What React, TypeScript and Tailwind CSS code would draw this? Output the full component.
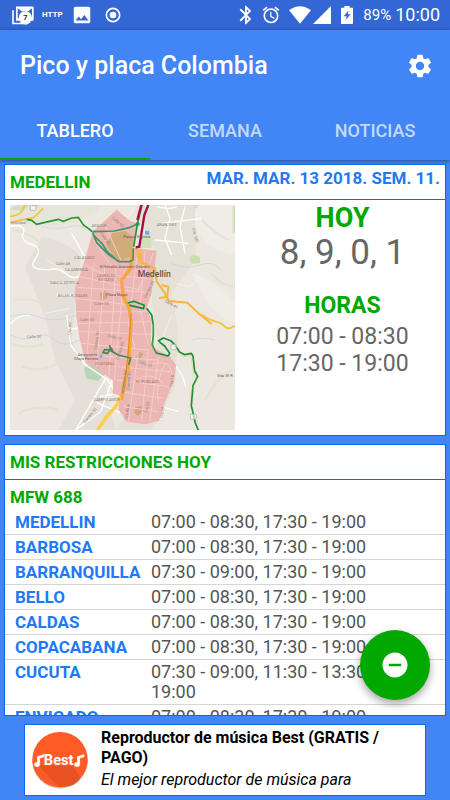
import React, { useState } from "react";
import { MdAlarm, MdBluetooth, MdImage, MdRemoveCircle, MdSettings } from "react-icons/md";

interface Restriction {
  city: string;
  hours: string;
}

const TABS = ["TABLERO", "SEMANA", "NOTICIAS"];

const RESTRICTIONS: Restriction[] = [
  { city: "MEDELLIN", hours: "07:00 - 08:30, 17:30 - 19:00" },
  { city: "BARBOSA", hours: "07:00 - 08:30, 17:30 - 19:00" },
  { city: "BARRANQUILLA", hours: "07:30 - 09:00, 17:30 - 19:00" },
  { city: "BELLO", hours: "07:00 - 08:30, 17:30 - 19:00" },
  { city: "CALDAS", hours: "07:00 - 08:30, 17:30 - 19:00" },
  { city: "COPACABANA", hours: "07:00 - 08:30, 17:30 - 19:00" },
  { city: "CUCUTA", hours: "07:30 - 09:00, 11:30 - 13:30, 17:30 - 19:00" },
  { city: "ENVIGADO", hours: "07:00 - 08:30, 17:30 - 19:00" },
];

const StatusBar = () => (
  <div className="flex h-[30px] shrink-0 items-center justify-between bg-[#3367d6] pr-[10px] pl-3 text-white">
    <div className="flex items-center">
      {/* Gallery notification with its counter */}
      <svg viewBox="0 0 66 56" className="h-[19px] w-[22px]" aria-hidden="true">
        <path d="M3 12v40h44" fill="none" stroke="#fff" strokeWidth="5" />
        <path d="M12 1h50q3 0 3 3v36q0 4-4 4H12z" fill="#fff" />
        <path d="M17 6l13 10h18L60 6v30H17z" fill="#3367d6" />
        <circle cx="40" cy="35" r="20" fill="#fff" />
        <text x="40" y="43" textAnchor="middle" fontSize="22" fontWeight="700" fill="#222">
          7
        </text>
      </svg>
      <span className="ml-2 text-[8px] leading-none font-bold">HTTP</span>
      <MdImage size={22} className="ml-2" />
      <svg viewBox="0 0 48 48" className="ml-3 h-4 w-4" aria-hidden="true">
        <circle cx="24" cy="24" r="20" fill="none" stroke="#fff" strokeWidth="5" />
        <circle cx="24" cy="24" r="10" fill="#fff" />
      </svg>
    </div>

    <div className="flex items-center">
      <MdBluetooth size={22} />
      <MdAlarm size={20} className="ml-1" />
      <svg viewBox="0 0 66 54" className="ml-2 h-[18px] w-[22px]" fill="currentColor" aria-hidden="true">
        <path d="M0 13Q33-11 66 13L33 53z" />
      </svg>
      <svg viewBox="0 0 54 54" className="ml-[2px] h-[18px] w-[18px]" fill="currentColor" aria-hidden="true">
        <path d="M54 0v54H0z" />
      </svg>
      <svg viewBox="0 0 36 54" className="ml-[10px] h-[18px] w-3" aria-hidden="true">
        <path d="M10 0h16v5h8q2 0 2 2v45q0 2-2 2H2q-2 0-2-2V7q0-2 2-2h8z" fill="#fff" />
        <path d="M23 13L8 31h9l-4 12 16-18h-9z" fill="#3367d6" />
      </svg>
      <span className="ml-[10px] text-[15px] leading-5">89%</span>
      <span className="ml-1 text-[18px] leading-5">10:00</span>
    </div>
  </div>
);

const MedellinMap = () => (
  <svg viewBox="15 15 675 675" className="block w-full" role="img" aria-label="Mapa de Medellin">
    <rect x="15" y="15" width="675" height="675" fill="#ece8df" />

    {/* Relief */}
    <path d="M15 60q100 30 180 10t90-55H15z" fill="#e6e5da" />
    <path d="M110 110Q200 130 225 170L200 420 240 500 300 550 330 690H160L210 600 150 480 120 350 60 200z" fill="#e4e0d7" />
    <path d="M385 15H580L570 180 500 280 520 400 510 560 440 690H330L470 520 440 300 450 160z" fill="#e5e1d7" />
    <path d="M570 15h120v150q-80-10-120-80zM560 220q80 20 130 90v60q-60-20-90-80z" fill="#efede6" />
    <path d="M25 90q60 10 90 50M30 300q60-10 90 20M50 500q60 20 110-10M40 640q60-30 120-10M590 60q40 40 80 60M600 600q30-60 80-90M620 220q30 40 70 40M15 430q60 20 100 0" fill="none" stroke="#e5e1d6" strokeWidth="7" />

    {/* Parks */}
    <path d="M237 503l20-13 33 15 10 20-22 18-35-8z" fill="#b9d5b5" />
    <path d="M553 172l15-7 17 6v18l-26 3z" fill="#c5dfae" />
    <path d="M15 26l25-11h30l-15 20zM562 15h20l-10 12zM683 18h7v80h-7zM410 110l20-6 10 12v28h-30z" fill="#d3dfbb" />

    {/* Streams */}
    <path d="M15 350q50-16 90 2t110-6M15 405q40 20 75 5t60 10 75 0M110 80q50 10 85 0t70 20M500 190q40 20 85 5t60 15M560 420q30-10 70 0" fill="none" stroke="#bfd0e0" strokeWidth="2" />

    {/* Secondary streets */}
    <path d="M15 78q50-5 40 20t25 35 10 45 45 30q30-5 50 15t50 0M15 372q30-30 60-25M185 345l12 90 45 60 60 40-90 155M327 525l-40 110-75 55M305 535l35 55M190 390l40-8M155 285h60M150 245l60 5M480 15l15 40-15 60 20 50M540 20l-15 60 15 80M470 70l120-15M450 120l100 10M455 20q40 10 60 0M512 500q20 15 30 60M470 620l50 15M285 590l55-10M275 608l70 30M200 100l50 90-30 60" fill="none" stroke="#fff" strokeWidth="4" />
    <path d="M500 345l-25 60 15 40M510 250l40 10 30-20M515 300l30 30M395 15l-25 35-40-10M590 80l30 15M125 180l70 40M120 340l75-15" fill="none" stroke="#f8f6f0" strokeWidth="2" />

    {/* Restricted area */}
    <path
      d="M335 29L375 63 400 70 385 143 455 152 440 280 425 325 440 360 437 420 447 445 493 467 513 495 508 540 480 605 462 663 420 673 365 665 340 628 345 588 323 580 325 543 278 507 242 490 225 420 214 350 210 265 235 195 263 95z"
      fill="#ecb6b2"
    />
    <path d="M322 100l40-7 22 20-2 55-45 18-34-52z" fill="#cfac79" />
    <path d="M285 280l18-8 5 22-20 8zM390 622l20-4 8 14-20 16-10-9zM400 455l15 5-10 20-12-8z" fill="#d3a488" />

    {/* Streets inside the area */}
    <g fill="none" stroke="#f4cfcb" strokeWidth="3">
      <path d="M240 195l60 30 130 10M225 230l180 40M215 262l215 15M214 295l200 25M215 335h220M220 370l220-5M225 395l215 8M230 430l200 20M240 465l220 15" />
      <path d="M265 120l55 80M300 75l50 110M265 195l-20 290M300 200l-25 300M332 205l-20 320M358 210l-30 330M395 175l-25 200 20 70M420 155l-15 170 25 110M445 160l-45 110" />
      <path d="M340 500l155 15M335 540l155 20M345 575l130 20M355 620l105 15M400 455l-30 210M430 450l-20 210M460 470l-25 190M480 490q-30 60-20 120M385 470q30 30 70 20t45 30M395 540q40-30 80 10" />
    </g>

    {/* Highways */}
    <path d="M382 150l-5 55-27 35 5 50 18 35 5 40-8 135-15 70-6 30" fill="none" stroke="#f9a53a" strokeWidth="10" />
    <path d="M395 145l10 40 45 20 5 40 22 30 15 28 55 5 35 33 38 31M405 150l5 45M470 255l20 5-3 30-25 5" fill="none" stroke="#f8b53f" strokeWidth="6" />
    <path d="M343 590q0 20-20 40t-45 60" fill="none" stroke="#fbcf4a" strokeWidth="10" />
    <path d="M15 50q35-5 40-25t45-8M15 67l70-14 30-28M590 344q20 15 40 20t30 16 30-3" fill="none" stroke="#f7c33c" strokeWidth="5" />
    <path d="M378 340l-4 70-10 100-14 70" fill="none" stroke="#e38b20" strokeWidth="3" />

    {/* Pico y placa routes */}
    <path d="M65 58l15 3 15 12 35-8 30-7 15 6 25-10 20-2 15 23 15 10 12 10" fill="none" stroke="#27962f" strokeWidth="5" />
    <path d="M263 95l65-2 45-10 25-12M263 98l12 30 35 35 32 22h30l12-5 1-35M268 108l25 25 12 20 25 23" fill="none" stroke="#3d966c" strokeWidth="5" />
    <path d="M411 15l-13 53-12 72" fill="none" stroke="#27962f" strokeWidth="5" />
    <path d="M409 15l-12 45M430 15l-12 30-15 95-11 2" fill="none" stroke="#a30d48" strokeWidth="7" />
    <circle cx="398" cy="72" r="6" fill="#1d9b62" />
    <path d="M368 309l18-5 32 12-3 10-40-10 37 8M425 325l15 20 5 30 0 30-3 30 12 24 35 9 5-8-15-22-13-10-5-6 14-8 22 8 12 12 15 22 15 8 20-4 5 8 5 45 9 16-14 28-5 60 12 52 11 27" fill="none" stroke="#188f3b" strokeWidth="5" strokeLinejoin="round" />
    <path d="M445 365v40l-3 30 12 24M510 449l27 22 20-4 10 60 9 10-18 38-2 50" fill="none" stroke="#d6b929" strokeWidth="1" />
    <path d="M314 435l3 15-18-1-5 9 14 2 6-10 25 15 38 9-6 20M317 443l7 10" fill="none" stroke="#46875a" strokeWidth="5" />

    {/* Markers */}
    <g stroke="#a8a8a8" strokeWidth="2" fill="#fff" fillOpacity="0.6">
      <rect x="76" y="17" width="17" height="14" rx="3" />
      <rect x="498" y="433" width="16" height="16" rx="3" />
      <rect x="556" y="642" width="18" height="16" rx="3" />
    </g>
    <path d="M420 92h13v12h-13zM284 465h8v8h-8z" fill="#78a7e5" />

    {/* Labels */}
    <g fill="#8a827a" fontSize="12">
      <text x="17" y="73">cristobal</text>
      <text x="260" y="80">AYACUR</text>
      <text x="455" y="78">ARANJUEZ</text>
      <text x="208" y="177">CALASANZ</text>
      <text x="180" y="213">LA AMERICA</text>
      <text x="135" y="252">SANTA MONICA</text>
      <text x="158" y="290">BELEN ROSALES</text>
      <text x="275" y="230" fill="#a87b6b">LAURELES</text>
      <text x="280" y="243" fill="#a87b6b">ESTADIO</text>
      <text x="152" y="194">Calle 48</text>
      <text x="66" y="415">Calle 30</text>
      <text x="268" y="314">Calle 33</text>
      <text x="225" y="362">Calle 30</text>
      <text x="270" y="495" fill="#a87b6b">GUAYABAL</text>
      <text x="393" y="549" fill="#a87b6b">EL POBLADO</text>
      <text x="266" y="603">CAMPO AMOR</text>
      <text transform="translate(320 55) rotate(40)">Calle 65</text>
      <text transform="translate(285 100) rotate(55)">Calle 80</text>
      <text transform="translate(562 85) rotate(76)">Cra. 18C</text>
      <text transform="translate(196 405) rotate(-85)">Cra. 80</text>
      <text transform="translate(275 450) rotate(-82)">Carrera 70</text>
      <text transform="translate(340 480) rotate(-72)">Carrera 52</text>
      <text transform="translate(357 580) rotate(-84)">Autopista Sur</text>
      <text transform="translate(373 570) rotate(-86)">Carrera 43</text>
      <text transform="translate(367 658) rotate(-80)">Cra 43 A</text>
      <text transform="translate(427 640) rotate(-80)">Cra 35</text>
      <text transform="translate(472 655) rotate(-80)">Cra 29</text>
      <text transform="translate(502 560) rotate(-82)">Cra 15</text>
      <text transform="translate(422 295) rotate(-62)">Carrera 39</text>
      <text transform="translate(307 410) rotate(15)">Calle 10</text>
      <text transform="translate(398 487) rotate(20)">Calle 10</text>
      <text transform="translate(478 305) rotate(30)">Calle 49</text>
      <text transform="translate(240 670) rotate(-50)">Carrera 52</text>
    </g>
    <g fill="#5e5860" fontSize="12">
      <text x="355" y="114">Parque Explora</text>
      <text x="285" y="203">El Estadio Atanasio Girardot</text>
      <text x="303" y="288">Plaza Mayor</text>
      <text x="218" y="467">Aeropuerto</text>
      <text x="207" y="479">Olaya Herrera</text>
      <text x="636" y="532">Vda. El R</text>
    </g>
    <text x="398" y="231" fontSize="26" fontWeight="500" fill="#6d5143">
      Medellín
    </text>
  </svg>
);

const BestLogo = () => (
  <svg viewBox="0 0 174 174" className="h-[58px] w-[58px] shrink-0" aria-hidden="true">
    <circle cx="87" cy="90" r="83" fill="#c9c9c9" />
    <circle cx="87" cy="86" r="83" fill="#fe5b27" />
    <path d="M24 105l58 62q50 4 66-27l-24-36z" fill="#e85222" />
    <path d="M19 77l20-6v6l-13 4v20a8 6 0 1 1-6-6zM139 77l20-6v6l-13 4v20a8 6 0 1 1-6-6z" fill="#fff" stroke="#fff" strokeWidth="2" />
    <text x="83" y="101" textAnchor="middle" fontSize="44" fontWeight="700" fill="#fff">
      Best
    </text>
  </svg>
);

const App: React.FC = () => {
  const [activeTab, setActiveTab] = useState(TABS[0]);

  return (
    <div className="flex h-screen flex-col overflow-hidden bg-[#4285f4] font-[Roboto,sans-serif]">
      <StatusBar />

      {/* App bar and tabs */}
      <header className="shrink-0 bg-[#4285f4] text-white shadow-[0_1px_4px_rgba(0,0,0,0.45)]">
        <div className="flex h-[72px] items-center justify-between pr-4 pl-5">
          <h1 className="text-[25px] leading-8 font-medium">Pico y placa Colombia</h1>
          <button type="button" aria-label="Ajustes">
            <MdSettings size={28} />
          </button>
        </div>
        <nav className="grid grid-cols-3" role="tablist">
          {TABS.map((tab) => (
            <button
              key={tab}
              type="button"
              role="tab"
              aria-selected={tab === activeTab}
              onClick={() => setActiveTab(tab)}
              className={
                tab === activeTab
                  ? "h-[58px] border-b-2 border-[#00a800] text-[18px] font-medium"
                  : "h-[58px] border-b-2 border-transparent text-[18px] font-medium text-white/70"
              }
            >
              {tab}
            </button>
          ))}
        </nav>
      </header>

      <main className="flex min-h-0 flex-1 flex-col px-1 pt-1 pb-1">
        {/* City of the day */}
        <section className="shrink-0 border border-[#0668f5] bg-white">
          <div className="flex h-[35px] justify-between border-b border-[#0668f5] px-[5px]">
            <h2 className="self-center text-[17px] leading-5 font-bold text-[#00a800]">MEDELLIN</h2>
            <p className="pt-[3px] text-[17px] leading-5 font-bold text-[#2279f5]">MAR. MAR. 13 2018. SEM. 11.</p>
          </div>
          <div className="grid grid-cols-[225fr_205fr] gap-[5px] py-[5px] pl-[5px]">
            <MedellinMap />
            <div className="text-center text-[#666]">
              <h3 className="text-[27px] leading-[27px] font-bold text-[#00a800]">HOY</h3>
              <p className="text-[35px] leading-[42px]">8, 9, 0, 1</p>
              <h3 className="mt-[18px] text-[23px] leading-[27px] font-bold text-[#00a800]">HORAS</h3>
              <p className="mt-1 text-[23px] leading-[27px]">07:00 - 08:30</p>
              <p className="text-[23px] leading-[27px]">17:30 - 19:00</p>
            </div>
          </div>
        </section>

        {/* Restrictions for the saved plates */}
        <section className="mt-2 min-h-0 flex-1 overflow-hidden border border-[#0668f5] bg-white">
          <h2 className="flex h-[35px] items-center border-b border-[#0668f5] px-[5px] pt-[2px] text-[17px] font-bold text-[#00a800]">
            MIS RESTRICCIONES HOY
          </h2>
          <h3 className="px-[5px] pt-[5px] pb-px text-[17px] leading-6 font-bold text-[#00a800]">MFW 688</h3>
          <table className="w-full border-collapse text-left">
            <tbody>
              {RESTRICTIONS.map(({ city, hours }) => (
                <tr key={city} className="border-b border-[#d6d6d6] align-top">
                  <th scope="row" className="w-[146px] py-[2px] pl-[10px] text-[17px] leading-5 font-bold text-[#2279f5]">
                    {city}
                  </th>
                  <td className="py-[2px] pr-[5px] text-[18px] leading-5 text-[#555]">{hours}</td>
                </tr>
              ))}
            </tbody>
          </table>
        </section>

        {/* Advert */}
        <a href="#best" className="mx-5 mt-2 flex shrink-0 items-center gap-3 border border-[#0668f5] bg-white px-[6px] text-black">
          <BestLogo />
          <div className="py-[3px]">
            <p className="text-[16px] leading-5 font-bold">Reproductor de música Best (GRATIS / PAGO)</p>
            <p className="text-[16px] leading-6 italic">El mejor reproductor de música para</p>
          </div>
        </a>
      </main>

      <button
        type="button"
        aria-label="Quitar placa"
        className="absolute right-5 bottom-[100px] flex h-[70px] w-[70px] items-center justify-center rounded-full bg-[#00a800] text-white shadow-[0_4px_8px_rgba(0,0,0,0.35)]"
      >
        <MdRemoveCircle size={30} />
      </button>
    </div>
  );
};

export default App;
